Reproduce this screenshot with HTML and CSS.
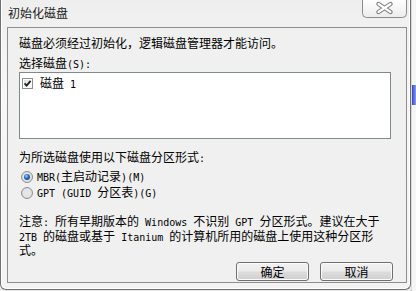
FILE: index.html
```html
<!DOCTYPE html>
<html lang="zh-CN">
<head>
<meta charset="utf-8">
<title>初始化磁盘</title>
<link rel="stylesheet" href="styles.css">
</head>
<body>
<div class="window">
  <div class="titlebar">
    <div class="title">初始化磁盘</div>
    <div class="close">
      <svg width="45" height="18" viewBox="0 0 45 18">
        <defs>
          <linearGradient id="cg" x1="0" y1="0" x2="0" y2="1">
            <stop offset="0" stop-color="#ffffff"/>
            <stop offset="1" stop-color="#ececec"/>
          </linearGradient>
        </defs>
        <path d="M0.5 -1 V13.5 Q0.5 17.5 4.5 17.5 H40.5 Q44.5 17.5 44.5 13.5 V-1" fill="url(#cg)" stroke="#8a8a8a"/>
        <g stroke-linecap="round">
          <path d="M16.5 4 L28.5 12 M28.5 4 L16.5 12" stroke="#7b7b7b" stroke-width="4.4"/>
          <path d="M16.5 4 L28.5 12 M28.5 4 L16.5 12" stroke="#ffffff" stroke-width="2.2"/>
        </g>
      </svg>
    </div>
  </div>
  <div class="client">
    <p class="intro">磁盘必须经过初始化，逻辑磁盘管理器才能访问。</p>
    <p class="label">选择磁盘<span class="lat">(S):</span></p>
    <div class="listbox">
      <div class="item">
        <svg class="check" width="11" height="11" viewBox="0 0 11 11">
          <defs>
            <linearGradient id="kg" x1="0" y1="0" x2="1" y2="1">
              <stop offset="0" stop-color="#dcdcdc"/>
              <stop offset="1" stop-color="#ffffff"/>
            </linearGradient>
          </defs>
          <rect x="0.5" y="0.5" width="10" height="10" fill="#ffffff" stroke="#8e8f8f"/>
          <rect x="2" y="2" width="7" height="7" fill="url(#kg)"/>
          <path d="M2.6 5.4 L4.6 7.6 L8.6 2.8" fill="none" stroke="#1f1f1f" stroke-width="1.8"/>
        </svg>
        <span>磁盘<span class="lat"> 1</span></span>
      </div>
    </div>
    <p class="group">为所选磁盘使用以下磁盘分区形式<span class="lat">:</span></p>
    <div class="radio first">
      <svg class="dot" width="12" height="12" viewBox="0 0 12 12">
        <defs>
          <radialGradient id="rg" cx="0.5" cy="0.5" r="0.5">
            <stop offset="0" stop-color="#ffffff"/>
            <stop offset="1" stop-color="#d6d6d6"/>
          </radialGradient>
          <radialGradient id="bg" cx="0.4" cy="0.35" r="0.6">
            <stop offset="0" stop-color="#a9d7f8"/>
            <stop offset="0.55" stop-color="#2a77c9"/>
            <stop offset="1" stop-color="#1a4f96"/>
          </radialGradient>
        </defs>
        <circle cx="6" cy="6" r="5.5" fill="url(#rg)" stroke="#8e8f8f"/>
        <circle cx="6" cy="6" r="3" fill="url(#bg)"/>
      </svg>
      <span><span class="lat">MBR(</span>主启动记录<span class="lat">)(M)</span></span>
    </div>
    <div class="radio">
      <svg class="dot" width="12" height="12" viewBox="0 0 12 12">
        <defs>
          <radialGradient id="rg2" cx="0.5" cy="0.5" r="0.5">
            <stop offset="0" stop-color="#ffffff"/>
            <stop offset="1" stop-color="#d6d6d6"/>
          </radialGradient>
        </defs>
        <circle cx="6" cy="6" r="5.5" fill="url(#rg2)" stroke="#8e8f8f"/>
        <circle cx="6" cy="6" r="3.5" fill="#e6e6e6"/>
      </svg>
      <span><span class="lat">GPT (GUID </span>分区表<span class="lat">)(G)</span></span>
    </div>
    <p class="note">注意<span class="lat">: </span>所有早期版本的<span class="lat"> Windows </span>不识别<span class="lat"> GPT </span>分区形式。建议在大于<span class="lat">2TB </span>的磁盘或基于<span class="lat"> Itanium </span>的计算机所用的磁盘上使用这种分区形式。</p>
    <div class="buttons">
      <button class="btn">确定</button>
      <button class="btn">取消</button>
    </div>
  </div>
</div>
<div class="strip">
  <div class="blue"></div>
</div>
</body>
</html>
```

FILE: styles.css
```css
html, body {
  margin: 0;
  padding: 0;
}

body {
  width: 416px;
  height: 291px;
  overflow: hidden;
  display: flex;
  align-items: flex-start;
  background: #e9e9e9;
  font-family: "Noto Sans CJK SC", sans-serif;
  font-size: 12px;
  color: #000;
}

.lat {
  font-family: "DejaVu Sans Mono", "Liberation Mono", monospace;
  font-size: 10px;
  white-space: pre;
}

.window {
  width: 411px;
  height: 290px;
  box-sizing: border-box;
  border: 1px solid #707070;
  border-top: none;
  border-radius: 0 0 6px 6px;
  padding: 0 3px 6px 6px;
  background: linear-gradient(#eeeeee, #f7f7f7 30%, #f3f3f3);
  box-shadow: inset 1px 0 0 #ffffff, inset -1px 0 0 #ffffff, inset 0 -1px 0 #ffffff;
  display: flex;
  flex-direction: column;
}

.titlebar {
  height: 27px;
  display: flex;
  justify-content: space-between;
  align-items: flex-start;
}

.title {
  padding: 6px 0 0 1px;
  line-height: 14px;
  color: #1a1a1a;
}

.close {
  width: 45px;
  height: 18px;
}

.close svg {
  display: block;
}

.client {
  width: 400px;
  height: 256px;
  box-sizing: border-box;
  border: 1px solid #8e8e8e;
  background: #f0f0f0;
  padding: 8px 0 0 11px;
  display: flex;
  flex-direction: column;
}

.client p {
  margin: 0;
}

.intro {
  line-height: 14px;
}

.client .label {
  margin-top: 6px;
  line-height: 14px;
}

.listbox {
  width: 372px;
  height: 67px;
  box-sizing: border-box;
  border: 1px solid #828790;
  background: #ffffff;
  padding: 5px 0 0 2px;
}

.item {
  display: flex;
  align-items: center;
  gap: 7px;
  height: 11px;
  line-height: 11px;
}

.check, .dot {
  display: block;
  flex: none;
}

.client .group {
  margin-top: 11px;
  line-height: 14px;
}

.radio {
  display: flex;
  align-items: center;
  gap: 4px;
  height: 16px;
  line-height: 16px;
  padding-left: 2px;
}

.radio.first {
  margin-top: 3px;
}

.client .note {
  margin-top: 14px;
  width: 363px;
  line-height: 12.5px;
}

.buttons {
  margin-top: 5px;
  padding-right: 13px;
  display: flex;
  justify-content: flex-end;
  gap: 11px;
}

.btn {
  width: 73px;
  height: 19px;
  box-sizing: border-box;
  padding: 0;
  border: 1px solid #707070;
  border-radius: 3px;
  background: linear-gradient(#f2f2f2 0%, #ebebeb 48%, #dddddd 52%, #cfcfcf 100%);
  box-shadow: inset 0 0 0 1px #fbfbfb;
  font-family: "Noto Sans CJK SC", sans-serif;
  font-size: 12px;
  line-height: 17px;
  color: #000;
}

.strip {
  width: 5px;
  height: 291px;
  background: #f6f6f6;
  border-left: 1px solid #dadada;
  display: flex;
  flex-direction: column;
}

.blue {
  margin-top: 85px;
  height: 20px;
  background: linear-gradient(90deg, #3145cf, #8d9be6);
}
```
